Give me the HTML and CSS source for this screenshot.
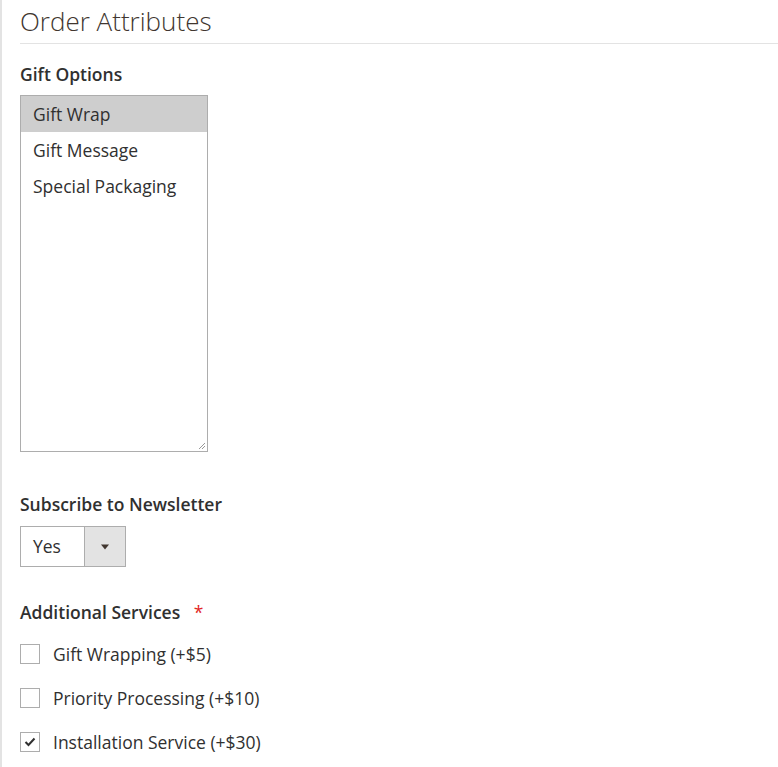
FILE: index.html
```html
<!DOCTYPE html>
<html>
<head>
<meta charset="utf-8">
<link rel="stylesheet" href="styles.css">
</head>
<body>
<div class="page">
  <h2 class="title">Order Attributes</h2>
  <div class="field">
    <div class="label">Gift Options</div>
    <div class="listbox">
      <div class="opt selected">Gift Wrap</div>
      <div class="opt">Gift Message</div>
      <div class="opt">Special Packaging</div>
      <svg class="grip" width="8" height="8" viewBox="0 0 8 8"><path d="M7 1 L1 7 M7 4 L4 7" stroke="#999" stroke-width="1" fill="none"/></svg>
    </div>
  </div>
  <div class="field field-news">
    <div class="label">Subscribe to Newsletter</div>
    <div class="select">
      <span class="select-val">Yes</span>
      <span class="select-btn"><svg width="10" height="6" viewBox="0 0 10 6"><path d="M1 0.5 L9 0.5 L5 5.5 Z" fill="#41362f"/></svg></span>
    </div>
  </div>
  <div class="field field-services">
    <div class="label">Additional Services <span class="req">*</span></div>
    <div class="checks">
      <label class="check"><span class="box"></span>Gift Wrapping (+$5)</label>
      <label class="check"><span class="box"></span>Priority Processing (+$10)</label>
      <label class="check"><span class="box checked"><svg width="12" height="10" viewBox="0 0 12 10"><path d="M1.5 5 L4.5 8 L10.5 1.5" stroke="#303030" stroke-width="2" fill="none"/></svg></span>Installation Service (+$30)</label>
    </div>
  </div>
</div>
</body>
</html>
```
FILE: styles.css
```css
html, body {
  margin: 0;
  padding: 0;
  background: #fff;
}
body {
  font-family: "Open Sans", "Liberation Sans", sans-serif;
  color: #303030;
}
.page {
  border-left: 2px solid #e3e3e3;
  min-height: 767px;
  padding-left: 18px;
  box-sizing: border-box;
}
.title {
  margin: 0;
  padding-top: 6px;
  padding-bottom: 7px;
  font-size: 26px;
  font-weight: 300;
  line-height: 30px;
  color: #41362f;
  border-bottom: 1px solid #e3e3e3;
}
.field {
  margin-top: 19px;
}
.label {
  font-size: 17.5px;
  font-weight: 600;
  line-height: 22px;
  color: #303030;
}
.listbox {
  position: relative;
  margin-top: 10px;
  width: 186px;
  height: 355px;
  border: 1px solid #adadad;
}
.opt {
  height: 36px;
  line-height: 36px;
  padding-left: 12px;
  font-size: 17.5px;
  color: #303030;
}
.opt.selected {
  background: #cecece;
}
.grip {
  position: absolute;
  right: 1px;
  bottom: 1px;
}
.field-news {
  margin-top: 41px;
}
.select {
  display: flex;
  margin-top: 11px;
  width: 104px;
  height: 39px;
  border: 1px solid #adadad;
}
.select-val {
  flex: 1;
  padding-left: 12px;
  line-height: 39px;
  font-size: 17.5px;
}
.select-btn {
  width: 40px;
  border-left: 1px solid #adadad;
  background: #e3e3e3;
  display: flex;
  align-items: center;
  justify-content: center;
}
.field-services {
  margin-top: 34px;
}
.req {
  color: #e22626;
  margin-left: 9px;
  font-weight: 400;
}
.checks {
  display: flex;
  flex-direction: column;
  gap: 22px;
  margin-top: 20px;
}
.check {
  display: flex;
  align-items: center;
  font-size: 17.5px;
  line-height: 22px;
  color: #303030;
}
.box {
  width: 20px;
  height: 20px;
  border: 1px solid #adadad;
  margin-right: 13px;
  display: flex;
  align-items: center;
  justify-content: center;
  box-sizing: border-box;
  flex: none;
}
```
